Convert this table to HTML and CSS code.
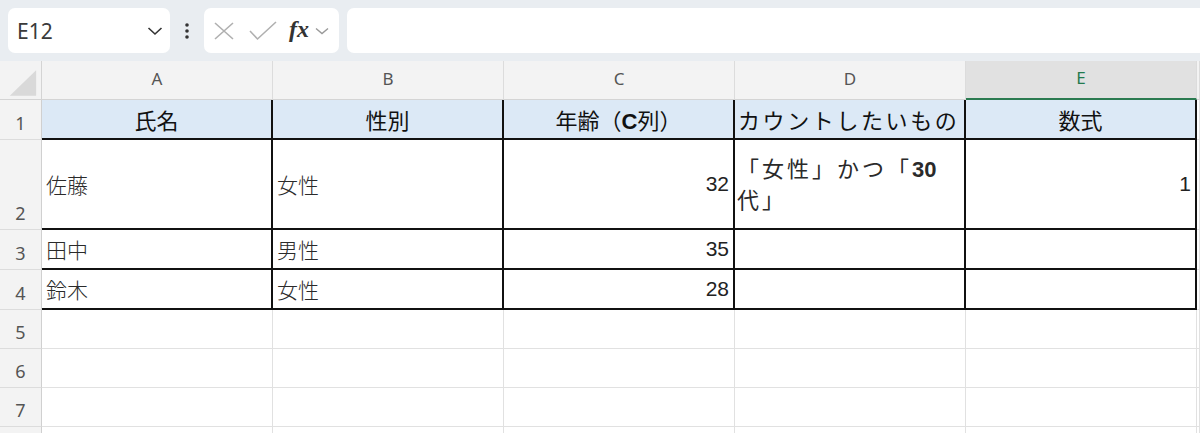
FILE: index.html
```html
<!DOCTYPE html>
<html lang="ja">
<head>
<meta charset="utf-8">
<link rel="stylesheet" href="styles.css">
</head>
<body>
<div class="toolbar">
  <div class="namebox">
    <span class="nb-text">E12</span>
    <svg class="chev" width="16" height="10" viewBox="0 0 16 10"><path d="M1.5 2 L8 8 L14.5 2" fill="none" stroke="#333" stroke-width="1.6"/></svg>
  </div>
  <div class="dots">
    <svg width="6" height="18" viewBox="0 0 6 18"><circle cx="3" cy="3" r="1.8" fill="#333"/><circle cx="3" cy="9" r="1.8" fill="#333"/><circle cx="3" cy="15" r="1.8" fill="#333"/></svg>
  </div>
  <div class="fxbox">
    <svg class="ico-x" width="20" height="18" viewBox="0 0 20 18"><path d="M1 1 L19 17 M19 1 L1 17" fill="none" stroke="#b0b0b0" stroke-width="1.6"/></svg>
    <svg class="ico-check" width="28" height="20" viewBox="0 0 28 20"><path d="M1 10 L8.5 18 L27 1" fill="none" stroke="#b0b0b0" stroke-width="1.6"/></svg>
    <span class="fx">fx</span>
    <svg class="chev-s" width="14" height="8" viewBox="0 0 14 8"><path d="M1 1.5 L7 6.5 L13 1.5" fill="none" stroke="#999" stroke-width="1.4"/></svg>
  </div>
  <div class="formula"></div>
</div>

<div class="sheet">
  <div class="c corner"><svg width="42" height="39" viewBox="0 0 42 39"><polygon points="10,35 37,35 37,9" fill="#d9d9d9"/></svg></div>
  <div class="c ch">A</div>
  <div class="c ch">B</div>
  <div class="c ch">C</div>
  <div class="c ch">D</div>
  <div class="c ch sel">E</div>
  <div class="c ch"></div>

  <div class="c rh">1</div>
  <div class="c t hd">氏名</div>
  <div class="c t hd">性別</div>
  <div class="c t hd"><span>年齢（<b class="lat">C</b>列）</span></div>
  <div class="c t hd wide">カウントしたいもの</div>
  <div class="c t hd">数式</div>
  <div class="c"></div>

  <div class="c rh">2</div>
  <div class="c t txt">佐藤</div>
  <div class="c t txt">女性</div>
  <div class="c t num">32</div>
  <div class="c t txt wrap"><span>「女性」かつ「<b class="lat">30</b><br>代」</span></div>
  <div class="c t num">1</div>
  <div class="c"></div>

  <div class="c rh">3</div>
  <div class="c t txt">田中</div>
  <div class="c t txt">男性</div>
  <div class="c t num">35</div>
  <div class="c t"></div>
  <div class="c t"></div>
  <div class="c"></div>

  <div class="c rh">4</div>
  <div class="c t txt">鈴木</div>
  <div class="c t txt">女性</div>
  <div class="c t num">28</div>
  <div class="c t"></div>
  <div class="c t"></div>
  <div class="c"></div>

  <div class="c rh">5</div>
  <div class="c"></div><div class="c"></div><div class="c"></div><div class="c"></div><div class="c"></div><div class="c"></div>
  <div class="c rh">6</div>
  <div class="c"></div><div class="c"></div><div class="c"></div><div class="c"></div><div class="c"></div><div class="c"></div>
  <div class="c rh">7</div>
  <div class="c"></div><div class="c"></div><div class="c"></div><div class="c"></div><div class="c"></div><div class="c"></div>
  <div class="c rh"></div>
  <div class="c"></div><div class="c"></div><div class="c"></div><div class="c"></div><div class="c"></div><div class="c"></div>
</div>
</body>
</html>
```

FILE: styles.css
```css
html, body {
  margin: 0;
  padding: 0;
  background: #ffffff;
  overflow: hidden;
  font-family: "Noto Sans", "Noto Sans CJK JP", sans-serif;
}

.toolbar {
  display: flex;
  align-items: center;
  height: 61px;
  background: #e9edf1;
  padding-left: 8px;
  box-sizing: border-box;
}

.namebox {
  width: 162px;
  height: 45px;
  background: #ffffff;
  border-radius: 7px;
  display: flex;
  align-items: center;
  justify-content: space-between;
  padding: 0 7px 0 9px;
  box-sizing: border-box;
}

.nb-text {
  font-size: 21px;
  color: #3a3a3a;
  font-family: "Noto Sans", sans-serif;
}

.dots {
  width: 34px;
  display: flex;
  justify-content: center;
  align-items: center;
}

.fxbox {
  width: 135px;
  height: 45px;
  background: #ffffff;
  border-radius: 7px;
  display: flex;
  align-items: center;
  padding-left: 10px;
  box-sizing: border-box;
}

.ico-x { margin-right: 15px; }
.ico-check { margin-right: 12px; }

.fx {
  font-family: "Liberation Serif", "DejaVu Serif", serif;
  font-style: italic;
  font-weight: bold;
  font-size: 24px;
  color: #333;
  margin-right: 6px;
  line-height: 1;
  position: relative;
  top: -2px;
}

.formula {
  flex: 1;
  height: 45px;
  background: #ffffff;
  border-radius: 7px 0 0 7px;
  margin-left: 8px;
}

.sheet {
  display: grid;
  grid-template-columns: 42px repeat(5, 231px) 1fr;
  grid-template-rows: 39px 40px 90px 40px 40px 39px 39px 39px 39px;
}

.c {
  border-right: 1px solid #e1e1e1;
  border-bottom: 1px solid #e1e1e1;
  box-sizing: border-box;
  display: flex;
  align-items: center;
  min-width: 0;
  overflow: hidden;
  white-space: nowrap;
}

.corner {
  background: #f3f3f3;
  border-right: 1px solid #d4d4d4;
  border-bottom: 1px solid #d4d4d4;
}

.ch {
  background: #f3f3f3;
  border-right: 1px solid #dcdcdc;
  border-bottom: 1px solid #d4d4d4;
  justify-content: center;
  color: #555;
  font-size: 17px;
  font-family: "Noto Sans", sans-serif;
  padding-bottom: 4px;
}

.ch.sel {
  background: #e1e1e1;
  color: #237a4e;
  border-bottom: 2px solid #2b7a50;
}

.rh {
  background: #f3f3f3;
  border-right: 1px solid #d0d0d0;
  border-bottom: 1px solid #dcdcdc;
  justify-content: center;
  align-items: flex-end;
  padding-bottom: 4px;
  color: #555;
  font-size: 18px;
  font-family: "Noto Sans", sans-serif;
}

.t {
  border-right: 2px solid #111;
  border-bottom: 2px solid #111;
}

.hd {
  background: #dce9f6;
  justify-content: center;
  font-family: "Noto Sans CJK JP", sans-serif;
  font-size: 22px;
  color: #111;
}

.hd.wide {
  justify-content: flex-start;
  padding-left: 3px;
  letter-spacing: 2.6px;
}

.lat {
  font-family: "Liberation Sans", Arial, sans-serif;
  font-weight: bold;
}

.txt {
  padding-left: 4px;
  font-family: "Noto Sans CJK JP", sans-serif;
  font-weight: 300;
  font-size: 21px;
  color: #2a2a2a;
}

.wrap {
  white-space: normal;
  line-height: 29px;
  font-weight: 400;
  font-size: 22px;
  padding-left: 2px;
  padding-bottom: 2px;
}

.wrap span {
  letter-spacing: 3px;
}

.wrap .lat {
  letter-spacing: 0;
}

.num {
  justify-content: flex-end;
  padding-right: 4px;
  font-family: "Liberation Sans", Arial, sans-serif;
  font-size: 21px;
  color: #222;
}
```
